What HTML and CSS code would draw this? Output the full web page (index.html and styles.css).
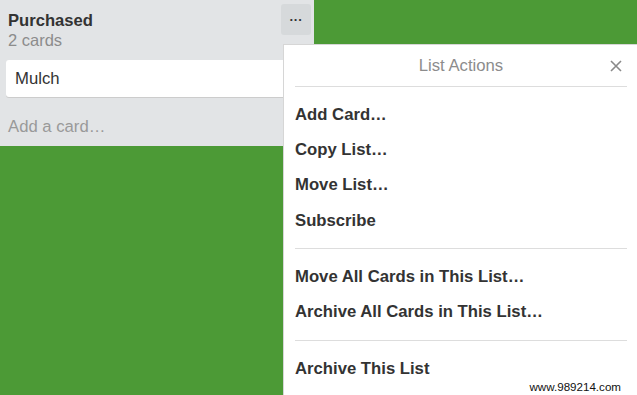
FILE: index.html
```html
<!DOCTYPE html>
<html>
<head>
    <title>List Actions</title>
    <link rel="stylesheet" href="styles.css">
</head>
<body>
    <div class="board">
        <div class="list">
            <div class="list-header">
                <div class="list-title">
                    <h2>Purchased</h2>
                    <span class="count">2 cards</span>
                </div>
                <button type="button" class="menu-btn">&middot;&middot;&middot;</button>
            </div>
            <div class="card">Mulch</div>
            <div class="add-card">Add a card&hellip;</div>
        </div>

        <div class="popover">
            <div class="popover-header">
                <span class="popover-title">List Actions</span>
                <span class="close">
                    <svg width="12" height="12" viewBox="0 0 12 12">
                        <path d="M1 1 L11 11 M11 1 L1 11" stroke="#8a8a8a" stroke-width="1.6" fill="none"/>
                    </svg>
                </span>
            </div>
            <ul class="actions">
                <li>Add Card&hellip;</li>
                <li>Copy List&hellip;</li>
                <li>Move List&hellip;</li>
                <li>Subscribe</li>
            </ul>
            <ul class="actions">
                <li>Move All Cards in This List&hellip;</li>
                <li>Archive All Cards in This List&hellip;</li>
            </ul>
            <ul class="actions">
                <li>Archive This List</li>
            </ul>
        </div>

        <div class="watermark">www.989214.com</div>
    </div>
</body>
</html>
```

FILE: styles.css
```css
body {
    margin: 0;
    background-color: #4c9a36;
    font-family: "Liberation Sans", Arial, sans-serif;
    overflow: hidden;
}
.board {
    position: relative;
    width: 637px;
    height: 395px;
}
.list {
    width: 314px;
    height: 146px;
    background-color: #e2e4e6;
    box-sizing: border-box;
    padding: 4px 3px 0 6px;
}
.list-header {
    display: flex;
    justify-content: space-between;
    align-items: flex-start;
}
.list-title {
    padding: 6px 0 0 2px;
}
.list-title h2 {
    margin: 0;
    font-size: 16.6px;
    line-height: 21px;
    color: #333;
}
.count {
    display: block;
    font-size: 16.5px;
    line-height: 19px;
    color: #8c8c8c;
}
.menu-btn {
    width: 30px;
    height: 31px;
    border: none;
    border-radius: 3px;
    background-color: #d6d9db;
    color: #333;
    font-size: 13px;
    font-weight: bold;
    padding: 0;
    cursor: pointer;
}
.card {
    margin-top: 10px;
    width: 290px;
    height: 37px;
    box-sizing: border-box;
    background-color: #fff;
    border-radius: 3px;
    box-shadow: 0 1px 0 #ccc;
    padding: 9px 9px;
    font-size: 16.7px;
    line-height: 19px;
    color: #333;
}
.add-card {
    padding: 20px 2px 0;
    font-size: 16.7px;
    line-height: 19px;
    color: #999;
}
.popover {
    position: absolute;
    left: 283px;
    top: 44px;
    width: 355px;
    height: 360px;
    background-color: #fff;
    border: 1px solid #d6d6d6;
    box-sizing: border-box;
    padding: 0 10px 0 11px;
}
.popover-header {
    display: flex;
    justify-content: center;
    align-items: center;
    position: relative;
    height: 41px;
    border-bottom: 1px solid #ddd;
}
.popover-title {
    font-size: 16.7px;
    color: #8c8c8c;
}
.close {
    position: absolute;
    right: 5px;
    top: 15px;
    line-height: 0;
}
.actions {
    list-style: none;
    margin: 0;
    padding: 10px 0;
    border-bottom: 1px solid #ddd;
}
.actions + .actions {
    padding-top: 10.5px;
}
.actions:last-child {
    border-bottom: none;
}
.actions li {
    font-size: 16.7px;
    font-weight: bold;
    color: #333;
    line-height: 19px;
    padding: 8px 0 8.2px;
}
.watermark {
    position: absolute;
    right: 16px;
    bottom: 2px;
    font-size: 11.6px;
    color: #111;
}
```
